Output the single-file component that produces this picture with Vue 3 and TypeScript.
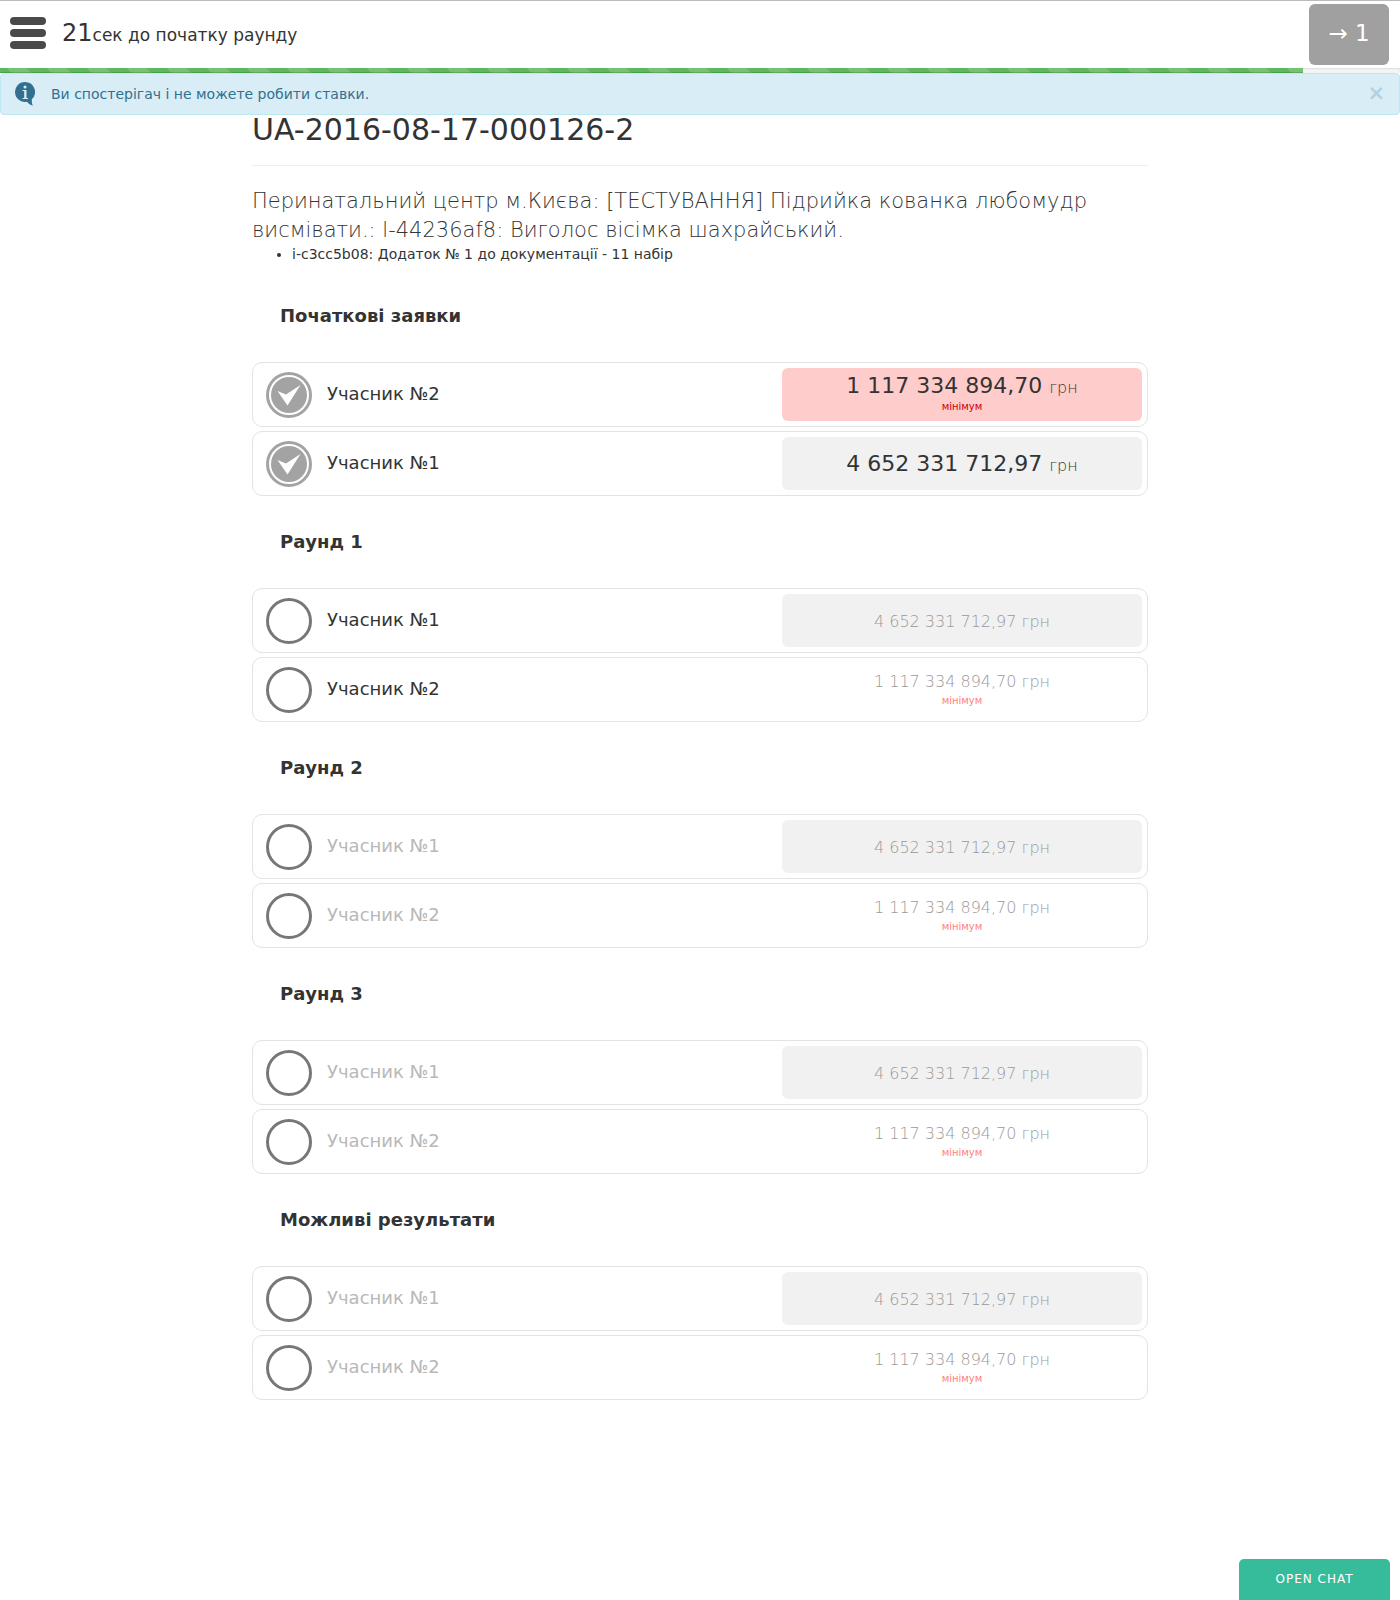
<script setup lang="ts">
import { ref } from 'vue'

interface Bid {
  bidder: string
  amount: string
  minimum: boolean
}

type Stage = 'done' | 'next' | 'pending'

interface Round {
  title: string
  stage: Stage
  bids: Bid[]
}

const first: Bid = { bidder: 'Учасник №1', amount: '4 652 331 712,97', minimum: false }
const second: Bid = { bidder: 'Учасник №2', amount: '1 117 334 894,70', minimum: true }

const rounds: Round[] = [
  { title: 'Початкові заявки', stage: 'done', bids: [second, first] },
  { title: 'Раунд 1', stage: 'next', bids: [first, second] },
  { title: 'Раунд 2', stage: 'pending', bids: [first, second] },
  { title: 'Раунд 3', stage: 'pending', bids: [first, second] },
  { title: 'Можливі результати', stage: 'pending', bids: [first, second] },
]

const secondsLeft = 21
const progress = 93.1
const noticeOpen = ref(true)
</script>

<template>
  <div class="page">
    <header class="topbar">
      <button class="menu" type="button" aria-label="Меню">
        <svg width="36" height="32" viewBox="0 0 36 32" aria-hidden="true">
          <rect width="36" height="8" rx="4" />
          <rect y="12" width="36" height="8" rx="4" />
          <rect y="24" width="36" height="8" rx="4" />
        </svg>
      </button>
      <p class="timer"><span class="seconds">{{ secondsLeft }}</span>сек до початку раунду</p>
      <button class="round-button" type="button">→ 1</button>
    </header>

    <div class="progress" role="progressbar" :aria-valuenow="progress" aria-valuemin="0" aria-valuemax="100">
      <div class="progress-bar" :style="{ width: progress + '%' }"></div>
    </div>

    <div v-if="noticeOpen" class="notice" role="status">
      <svg class="notice-icon" width="20" height="24" viewBox="0 0 20 24" aria-hidden="true">
        <path d="M10 0a10 10 0 1 0 2 19.800c1.500 2 3.300 3.200 6 4-.9-1.300-1.300-3-1.200-6.500A10 10 0 0 0 10 0z" fill="#31708f" />
        <circle cx="10" cy="5" r="1.500" fill="#d9edf7" />
        <path d="M7.500 8h4v8h1.500v1h-5.500v-1h1.700V9H7.500z" fill="#d9edf7" />
      </svg>
      <span class="notice-text">Ви спостерігач і не можете робити ставки.</span>
      <button class="close" type="button" aria-label="Закрити" @click="noticeOpen = false">×</button>
    </div>

    <main class="content">
      <h1>UA-2016-08-17-000126-2</h1>
      <p class="lead">
        Перинатальний центр м.Києва: [ТЕСТУВАННЯ] Підрийка кованка любомудр висмівати.: l-44236af8: Виголос вісімка шахрайський.
      </p>
      <ul class="items">
        <li>i-c3cc5b08: Додаток № 1 до документації - 11 набір</li>
      </ul>

      <section v-for="round in rounds" :key="round.title" class="round" :class="round.stage">
        <h2>{{ round.title }}</h2>
        <div class="bids">
          <div v-for="bid in round.bids" :key="bid.bidder" class="bid" :class="{ minimum: bid.minimum }">
            <svg class="mark" width="46" height="46" viewBox="0 0 46 46" aria-hidden="true">
              <template v-if="round.stage === 'done'">
                <circle cx="23" cy="23" r="21.500" fill="#fff" stroke="#a3a3a3" stroke-width="3" />
                <circle cx="23" cy="23" r="18" fill="#a3a3a3" />
                <path d="M11.500 19l8.500 3.500L34.500 13 21.500 33.500z" fill="#fff" />
              </template>
              <circle v-else cx="23" cy="23" r="21.500" fill="#fff" stroke="#777" stroke-width="3" />
            </svg>
            <span class="bidder">{{ bid.bidder }}</span>
            <div class="price">
              <span class="amount"><span class="number">{{ bid.amount + ' ' }}</span>грн</span>
              <span v-if="bid.minimum" class="label">мінімум</span>
            </div>
          </div>
        </div>
      </section>
    </main>

    <button class="chat" type="button">OPEN CHAT</button>
  </div>
</template>

<style>
body {
  background: #fff;
}
</style>

<style scoped>
.page {
  min-height: 100vh;
  color: #333;
  font: 14px/20px "DejaVu Sans", sans-serif;
}

.page * {
  box-sizing: border-box;
}

button {
  border: 0;
  padding: 0;
  background: none;
  font-family: inherit;
  cursor: pointer;
}

.topbar {
  display: flex;
  align-items: center;
  height: 68px;
  padding: 0 11px 0 10px;
  border-top: 1px solid #bbb;
}

.menu {
  display: flex;
  margin-bottom: 4px;
  fill: #4a4a4a;
}

.timer {
  flex: 1;
  margin: 0 0 1px 16px;
  font-size: 17px;
  line-height: 32px;
}

.seconds {
  font-size: 24px;
}

.round-button {
  width: 80px;
  height: 61px;
  padding-bottom: 4px;
  border-radius: 6px;
  background: #a0a0a0;
  color: #fff;
  font-size: 23px;
}

.progress {
  height: 5px;
  background: #f5f5f5;
  box-shadow: inset 0 1px 2px rgba(0, 0, 0, 0.1);
}

.progress-bar {
  height: 100%;
  background-color: #5cb85c;
  background-image: linear-gradient(45deg, rgba(255, 255, 255, 0.15) 25%, transparent 25%, transparent 50%, rgba(255, 255, 255, 0.15) 50%, rgba(255, 255, 255, 0.15) 75%, transparent 75%);
  background-position: 7px 0;
  background-size: 40px 40px;
  box-shadow: inset 0 -1px 0 rgba(0, 0, 0, 0.15);
}

.notice {
  display: flex;
  align-items: center;
  height: 42px;
  padding: 0 14px;
  border: 1px solid #bce8f1;
  border-radius: 4px;
  background: #d9edf7;
  color: #31708f;
}

.notice-text {
  flex: 1;
  margin-left: 16px;
}

.close {
  padding-bottom: 2px;
  color: #b2d2e2;
  font-size: 21px;
  font-weight: 700;
  line-height: 20px;
}

.content {
  max-width: 896px;
  margin: 0 auto;
  padding-bottom: 100px;
}

h1 {
  margin: 0;
  padding-bottom: 20px;
  border-bottom: 1px solid #eee;
  font-size: 30px;
  font-weight: 400;
  line-height: 30px;
}

.lead {
  margin: 21px 0 0;
  font-size: 21px;
  font-weight: 200;
  line-height: 29px;
}

.items {
  margin: 0 0 43px;
  padding-left: 40px;
  line-height: 18px;
}

.items + .round h2 {
  margin-top: 43px;
}

h2 {
  margin: 36px 28px;
  font-size: 18px;
  font-weight: 700;
  line-height: 20px;
}

.bids {
  display: flex;
  flex-direction: column;
  gap: 4px;
}

.bid {
  display: flex;
  align-items: center;
  height: 65px;
  padding: 5px 5px 5px 13px;
  border: 1px solid #e3e3e3;
  border-radius: 10px;
}

.bidder {
  flex: 1;
  margin-left: 15px;
  padding-bottom: 2px;
  font-size: 18px;
}

.price {
  display: flex;
  flex-direction: column;
  align-items: center;
  justify-content: center;
  width: 360px;
  height: 53px;
  padding-top: 2px;
  border-radius: 6px;
  background: #f1f1f1;
}

.minimum .price {
  padding-top: 0;
}

.amount {
  font-size: 16px;
  font-weight: 200;
  line-height: 22px;
}

.label {
  font-size: 10px;
  line-height: 16px;
  color: #c00;
}

.done .number {
  font-size: 22px;
  font-weight: 400;
}

.done .minimum .price {
  background: #fcc;
}

.pending .bidder {
  color: #b8b8b8;
}

.next .amount,
.pending .amount {
  color: #999;
}

.next .minimum .price,
.pending .minimum .price {
  background: none;
}

.next .label,
.pending .label {
  color: #ff8080;
}

.chat {
  position: fixed;
  right: 10px;
  bottom: 0;
  width: 151px;
  height: 41px;
  padding-bottom: 2px;
  border-radius: 5px 5px 0 0;
  background: #37bc9b;
  color: #fff;
  font-size: 12px;
  letter-spacing: 1px;
}
</style>
